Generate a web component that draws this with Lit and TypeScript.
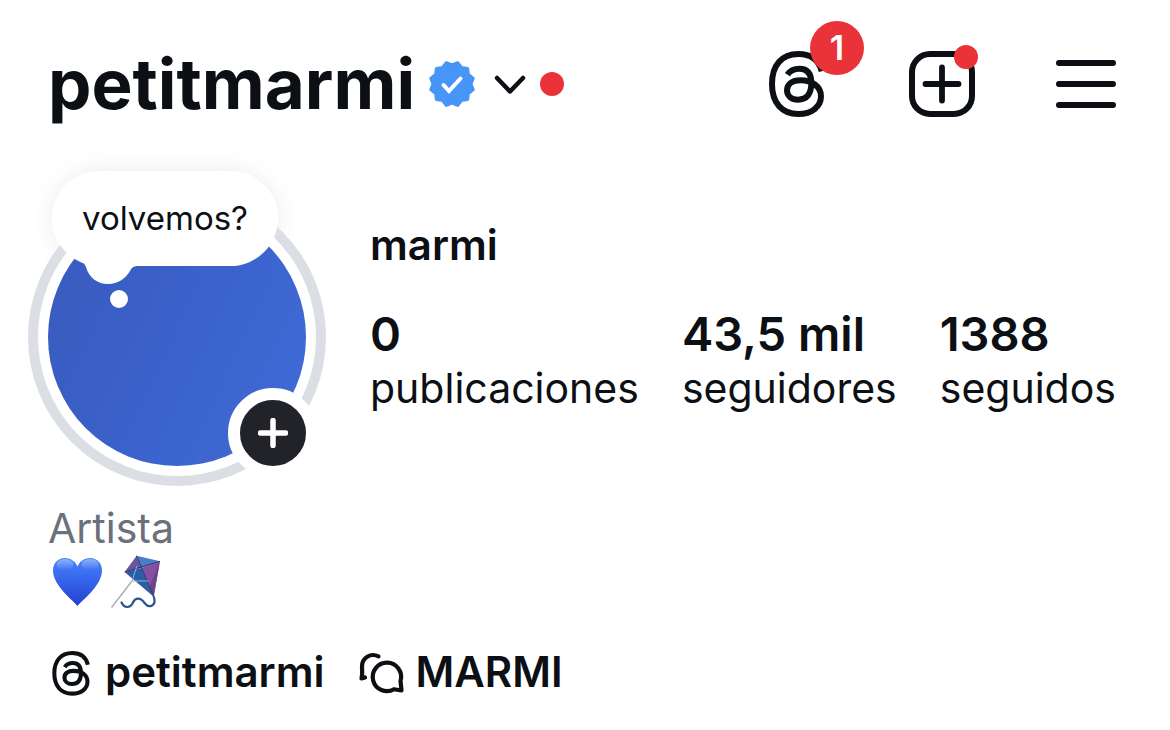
import { LitElement, html, css, svg } from "lit";
import { customElement, property } from "lit/decorators.js";

const threadsGlyph = svg`<path fill="none" stroke="currentColor" stroke-width="18" stroke-linecap="butt" stroke-linejoin="round"
  d="M160 64C151 28 126 12 90 12C40 12 11 46 11 102C11 158 40 192 90 192C130 192 158 170 158 139C158 108 130 91 97 91C70 91 56 103 56 121C56 138 70 149 89 149C116 149 129 131 129 100C129 70 117 56 93 56C76 56 65 62 57 74"/>`;

/* Scalloped seal with twelve points, centred on 24,24. */
const sealPoints = Array.from({ length: 24 }, (_, i) => {
  const angle = ((i * 15 + 15) * Math.PI) / 180;
  const radius = i % 2 === 0 ? 22 : 19;
  return `${(24 + radius * Math.cos(angle)).toFixed(2)},${(24 + radius * Math.sin(angle)).toFixed(2)}`;
}).join(" ");

@customElement("profile-avatar")
export class ProfileAvatar extends LitElement {
  @property() note = "";

  static styles = css`
    :host {
      display: block;
      position: relative;
      isolation: isolate;
      flex: none;
      width: 298px;
      height: 298px;
      color: #0c1014;
    }
    * {
      box-sizing: border-box;
    }
    .ring {
      width: 100%;
      height: 100%;
      padding: 10px;
      border: 10px solid #dbdee4;
      border-radius: 50%;
      background: #fff;
    }
    .photo {
      width: 100%;
      height: 100%;
      border-radius: 50%;
      background: linear-gradient(115deg, #385abb 0%, #3b62cb 50%, #406bd8 100%);
    }
    button {
      border: 0;
      margin: 0;
      font: inherit;
      color: inherit;
      cursor: pointer;
    }
    .note {
      position: absolute;
      left: 24px;
      top: -17px;
      height: 95px;
      padding: 0 30px;
      border-radius: 48px;
      background: #fff;
      font-size: 33px;
      line-height: 95px;
      white-space: nowrap;
    }
    /* The shadow falls behind the photo, not on it. */
    .note::before {
      content: "";
      position: absolute;
      inset: 0;
      z-index: -1;
      border-radius: 48px;
      box-shadow: 0 0 24px rgba(0, 0, 0, 0.08);
    }
    .tail {
      position: absolute;
      left: 44px;
      top: 68px;
      width: 72px;
      height: 54px;
    }
    .add {
      position: absolute;
      right: 8px;
      bottom: 8px;
      display: flex;
      width: 90px;
      height: 90px;
      padding: 0;
      border: 12px solid #fff;
      border-radius: 50%;
      background: #212328;
      color: #fff;
    }
    .add svg {
      margin: auto;
    }
  `;

  render() {
    return html`
      <div class="ring"><div class="photo" role="img" aria-label="Foto del perfil"></div></div>
      <button class="note">${this.note}</button>
      <svg class="tail" viewBox="0 0 72 54" aria-hidden="true">
        <path fill="#fff" d="M0 0V0C4 5 11 3 14 11C17 22 26 28 36 28C46 28 54 22 58 15C60 11 62 10 67 10V0Z" />
        <circle cx="47" cy="43" r="9" fill="#fff" />
      </svg>
      <button class="add" aria-label="Añadir historia">
        <svg width="30" height="30" viewBox="0 0 30 30" aria-hidden="true">
          <path d="M15 2.500V27.500M2.500 15H27.500" stroke="currentColor" stroke-width="5.500" stroke-linecap="round" />
        </svg>
      </button>
    `;
  }
}

@customElement("app-root")
export class AppRoot extends LitElement {
  private stats = [
    { value: "0", label: "publicaciones" },
    { value: "43,5 mil", label: "seguidores" },
    { value: "1388", label: "seguidos" },
  ];

  static styles = css`
    :host {
      display: block;
      min-height: 100vh;
      background: #fff;
      color: #0c1014;
      font-family: Inter, "Liberation Sans", sans-serif;
    }
    * {
      box-sizing: border-box;
    }
    svg {
      display: block;
      flex: none;
      overflow: visible;
    }
    button {
      padding: 0;
      margin: 0;
      border: 0;
      background: none;
      font: inherit;
      color: inherit;
      cursor: pointer;
    }
    a {
      color: inherit;
      text-decoration: none;
    }
    header {
      display: flex;
      align-items: center;
      justify-content: space-between;
      padding: 50px 54px 0 48px;
    }
    .account {
      display: flex;
      align-items: center;
      height: 68px;
    }
    h1 {
      margin: 0 13px 0 0;
      font-size: 69px;
      line-height: 68px;
      font-weight: 700;
    }
    .seal {
      margin-right: 17px;
    }
    .chevron {
      margin-right: 13px;
    }
    .dot {
      width: 24px;
      height: 24px;
      border-radius: 50%;
      background: #ea3239;
    }
    .actions {
      display: flex;
      align-items: center;
      gap: 81px;
    }
    .action {
      position: relative;
    }
    .count {
      position: absolute;
      left: 41px;
      top: -29px;
      width: 54px;
      height: 54px;
      border-radius: 50%;
      background: #ea3239;
      color: #fff;
      font-size: 34px;
      line-height: 54px;
      font-weight: 600;
      text-align: center;
    }
    .action .dot {
      position: absolute;
      right: -3px;
      top: -6px;
    }
    .profile {
      display: flex;
      gap: 44px;
      padding: 70px 48px 0 28px;
    }
    .info {
      padding-top: 32px;
    }
    h2 {
      margin: 0 0 37px;
      font-size: 42px;
      line-height: 50px;
      font-weight: 600;
    }
    .stats {
      display: flex;
      gap: 43px;
    }
    .stat {
      display: block;
      font-size: 41px;
      line-height: 54px;
    }
    .stat strong {
      display: block;
      font-size: 47px;
      font-weight: 600;
    }
    .bio {
      padding: 15px 48px 0;
      font-size: 41px;
      line-height: 54px;
    }
    .bio p {
      margin: 0;
    }
    .category {
      color: #6a717c;
    }
    .emojis {
      display: flex;
      gap: 7px;
      padding-left: 2px;
    }
    .links {
      display: flex;
      gap: 34px;
      padding: 39px 48px 30px;
      font-size: 42px;
      line-height: 48px;
      font-weight: 600;
    }
    .links a {
      display: flex;
      align-items: center;
      gap: 11px;
    }
  `;

  render() {
    return html`
      <header>
        <button class="account">
          <h1>petitmarmi</h1>
          <svg class="seal" width="48" height="48" viewBox="0 0 48 48" role="img" aria-label="Verificado">
            <polygon points=${sealPoints} fill="#4695f7" stroke="#4695f7" stroke-width="3" stroke-linejoin="round" />
            <path d="M15.500 25L21 31L32.500 18.500" fill="none" stroke="#fff" stroke-width="4" stroke-linecap="round" stroke-linejoin="miter" />
          </svg>
          <svg class="chevron" width="34" height="24" viewBox="0 0 34 24" aria-hidden="true">
            <path d="M4 6L17 19.500L30 6" fill="none" stroke="currentColor" stroke-width="4.500" stroke-linecap="round" stroke-linejoin="round" />
          </svg>
          <span class="dot"></span>
        </button>
        <div class="actions">
          <button class="action" aria-label="Threads">
            <svg width="59" height="68" viewBox="2 0 177 204">${threadsGlyph}</svg>
            <span class="count">1</span>
          </button>
          <button class="action" aria-label="Crear">
            <svg width="66" height="66" viewBox="0 0 66 66">
              <rect x="3" y="3" width="60" height="60" rx="18" fill="none" stroke="currentColor" stroke-width="6" />
              <path d="M33 16.500V49.500M16.500 33H49.500" stroke="currentColor" stroke-width="5.800" stroke-linecap="round" />
            </svg>
            <span class="dot"></span>
          </button>
          <button class="action" aria-label="Menú">
            <svg width="60" height="48" viewBox="0 0 60 48">
              <path d="M3 3H57M3 24H57M3 45H57" stroke="currentColor" stroke-width="6" stroke-linecap="round" />
            </svg>
          </button>
        </div>
      </header>

      <section class="profile">
        <profile-avatar note="volvemos?"></profile-avatar>
        <div class="info">
          <h2>marmi</h2>
          <div class="stats">
            ${this.stats.map(
              (s) => html`<a class="stat" href="#"><strong>${s.value}</strong>${s.label}</a>`
            )}
          </div>
        </div>
      </section>

      <section class="bio">
        <p class="category">Artista</p>
        <div class="emojis">
          <svg width="54" height="54" viewBox="0 0 54 54" role="img" aria-label="Corazón azul">
            <defs>
              <linearGradient id="heart" x1="0" y1="0" x2="0" y2="1">
                <stop offset="0" stop-color="#4c83f6" />
                <stop offset="0.35" stop-color="#3a6cf0" />
                <stop offset="1" stop-color="#2341d0" />
              </linearGradient>
              <linearGradient id="shine" x1="0" y1="0" x2="0" y2="1">
                <stop offset="0" stop-color="#b4d3ff" stop-opacity="0.6" />
                <stop offset="1" stop-color="#b4d3ff" stop-opacity="0" />
              </linearGradient>
            </defs>
            <path fill="url(#heart)" d="M27.500 51C24 46 3 31 3 15.500C3 8 8 3 15 3C20.500 3 25.500 6.500 27.500 11.500C29.500 6.500 34.500 3 40 3C47 3 52 8 52 15.500C52 31 31 46 27.500 51Z" />
            <ellipse cx="15" cy="9.500" rx="8.500" ry="5.500" fill="url(#shine)" />
            <ellipse cx="40" cy="9.500" rx="8.500" ry="5.500" fill="url(#shine)" />
          </svg>
          <svg width="52" height="54" viewBox="0 0 52 54" role="img" aria-label="Cometa">
            <path d="M0.500 52.500L21 26" stroke="#a9a9ae" stroke-width="1.300" fill="none" />
            <path d="M25.600 0.700L30.500 13L13.600 17Z" fill="#6c559f" />
            <path d="M25.600 0.700L49 6.300L30.500 13Z" fill="#4a7cc8" />
            <path d="M13.600 17L30.500 13L42.700 41.700Z" fill="#2c5da6" />
            <path d="M49 6.300L30.500 13L42.700 41.700Z" fill="#8650a4" />
            <path d="M49 6.300L42.700 41.700L38.500 32Z" fill="#5b397f" opacity="0.6" />
            <path d="M25.600 0.700L42.700 41.700M13.600 17L49 6.300" stroke="#2d3771" stroke-width="1" fill="none" />
            <path d="M21 26L26 11M21 26L38 26" stroke="#93b7df" stroke-width="0.900" fill="none" />
            <path d="M42.700 41.500C46 51 38 53.500 34 48.500C29 41.500 24 43 22 47.500C19 54 13 53 10.500 47.500" fill="none" stroke="#28578f" stroke-width="2.200" stroke-linecap="round" />
          </svg>
        </div>
      </section>

      <nav class="links">
        <a href="#">
          <svg width="46" height="46" viewBox="-17 -6 204 204" aria-hidden="true">${threadsGlyph}</svg>
          <span>petitmarmi</span>
        </a>
        <a href="#">
          <svg width="46" height="42" viewBox="0 0 46 42" aria-hidden="true">
            <path d="M41.500 30A14.200 14.200 0 1 0 35 38.200L42.500 39.500Z" fill="none" stroke="currentColor" stroke-width="4.200" stroke-linejoin="round" />
            <path d="M19.500 5.300C11.500 1.500 3 7 3 15.500C3 19.500 3.800 22.500 2.500 27.500L6 26.500" fill="none" stroke="currentColor" stroke-width="4.200" stroke-linecap="round" stroke-linejoin="round" />
          </svg>
          <span>MARMI</span>
        </a>
      </nav>
    `;
  }
}
